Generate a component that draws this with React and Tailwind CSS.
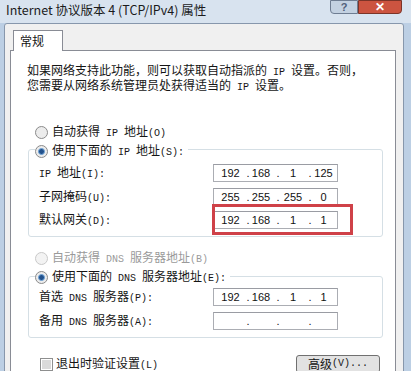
import React from "react";

const cjk = "font-['Noto_Sans_CJK_SC',sans-serif]";

// SimSun-like mix: latin runs in a 6px-per-char mono face
const Mix = ({ s }) =>
  s.split(/([\x20-\x7e]+)/).map((p, i) =>
    i % 2 === 1 ? (
      <span key={i} className="font-['Liberation_Mono',monospace] text-[10px]">
        {p}
      </span>
    ) : (
      p
    )
  );

const Radio = ({ checked, disabled }) => (
  <span
    className={`relative flex h-[13px] w-[13px] shrink-0 items-center justify-center rounded-full border ${
      disabled ? "border-[#c9c9c9] bg-[#f3f3f3]" : "border-[#8b8b8b] bg-[#ececec]"
    }`}
  >
    {checked && <span className="h-[7px] w-[7px] rounded-full border border-[#6fa4d8] bg-[#24528c]" />}
  </span>
);

const RadioRow = ({ text, checked, disabled, className = "" }) => (
  <div className={`flex h-[16px] items-center gap-[4px] leading-[16px] ${className}`}>
    <Radio checked={checked} disabled={disabled} />
    <span className={`whitespace-nowrap ${disabled ? "text-[#9a9a9a]" : ""}`}>
      <Mix s={text} />
    </span>
  </div>
);

const IpBox = ({ parts }) => {
  const cells = ["w-[33px]", "w-[24px]", "w-[20px]", "w-[13px]"];
  const dots = ["w-[2px]", "w-[10px]", "w-[14px]"];
  return (
    <div className="flex h-[18px] w-[125px] items-center border border-[#abadb3] border-t-[#9a9ca3] bg-white font-['Liberation_Sans',sans-serif] text-[11px] text-[#111]">
      {parts.map((p, i) => (
        <React.Fragment key={i}>
          <div className={`flex justify-center whitespace-nowrap ${cells[i]}`}>{p}</div>
          {i < 3 && <div className={`flex justify-center ${dots[i]}`}>.</div>}
        </React.Fragment>
      ))}
    </div>
  );
};

const Row = ({ label, parts, className = "" }) => (
  <div className={`flex h-[18px] items-center pl-[10px] ${className}`}>
    <span className="w-[174px] whitespace-nowrap leading-[16px]">
      <Mix s={label} />
    </span>
    <IpBox parts={parts} />
  </div>
);

export default function App() {
  return (
    <div className={`h-[371px] w-[411px] overflow-hidden bg-[#bccfe4] ${cjk} text-[12px] text-[#151515]`}>
      {/* title bar */}
      <div className="flex h-[23px] items-start bg-[#d8e3ef]">
        <span className="ml-[6px] mt-[2px] whitespace-nowrap text-[12.5px] leading-[16px] text-[#1b1b1b]">
          Internet 协议版本 4 (TCP/IPv4) 属性
        </span>
        <div className="ml-auto mr-[9px] flex h-[14px]">
          <div className="flex h-[14px] w-[28px] items-center justify-center rounded-bl-[4px] border border-[#6e7d92] bg-[#c3d1e1] font-['Liberation_Sans',sans-serif] text-[11px] font-bold leading-none text-[#50607a]">
            ?
          </div>
          <div className="flex h-[14px] w-[44px] items-center justify-center rounded-br-[4px] border border-[#7b3428] bg-[#cc5440] font-['Liberation_Sans',sans-serif] text-[12px] font-bold leading-none text-white">
            ✕
          </div>
        </div>
      </div>

      {/* dialog body */}
      <div className="ml-[4px] h-[360px] w-[400px] rounded-t-[3px] border border-[#8797ac] bg-[#f0f0f0] pl-[5px] pt-[6px]">
        <div className="relative z-10 -mb-px ml-[3px] h-[21px] w-[50px] border border-b-0 border-[#898c95] bg-white pl-[6px] leading-[19px]">
          常规
        </div>
        <div className="h-[330px] w-[386px] border border-[#898c95] bg-white pl-[16px] pt-[13px]">
          <p className="whitespace-nowrap leading-[12px]">
            <Mix s="如果网络支持此功能，则可以获取自动指派的 IP 设置。否则，" />
            <br />
            <Mix s="您需要从网络系统管理员处获得适当的 IP 设置。" />
          </p>

          <RadioRow className="ml-[8px] mt-[30px]" text="自动获得 IP 地址(O)" />

          <div className="ml-[1px] mt-[9px] w-[355px] rounded-[3px] border border-[#d5dfe5] pb-[7px]">
            <RadioRow className="-mt-[7px] ml-[6px] w-fit bg-white pr-[4px]" text="使用下面的 IP 地址(S):" checked />
            <Row className="mt-[5px]" label="IP 地址(I):" parts={["192", "168", "1", "125"]} />
            <Row className="mt-[6px]" label="子网掩码(U):" parts={["255", "255", "255", "0"]} />
            <Row className="mt-[5px]" label="默认网关(D):" parts={["192", "168", "1", "1"]} />
          </div>

          <RadioRow className="ml-[8px] mt-[13px]" text="自动获得 DNS 服务器地址(B)" disabled />

          <div className="ml-[1px] mt-[10px] w-[355px] rounded-[3px] border border-[#d5dfe5] pb-[7px]">
            <RadioRow className="-mt-[8px] ml-[6px] w-fit bg-white pr-[4px]" text="使用下面的 DNS 服务器地址(E):" checked />
            <Row className="mt-[3px]" label="首选 DNS 服务器(P):" parts={["192", "168", "1", "1"]} />
            <Row className="mt-[6px]" label="备用 DNS 服务器(A):" parts={["", "", "", ""]} />
          </div>

          <div className="mt-[17px] flex h-[18px] w-[353px] items-center">
            <div className="ml-[13px] flex h-[13px] w-[13px] items-center justify-center border border-[#8e8f8f] bg-white">
              <div className="h-[9px] w-[9px] bg-[#dadada]" />
            </div>
            <span className="ml-[3px] whitespace-nowrap leading-[16px]">
              <Mix s="退出时验证设置(L)" />
            </span>
            <div className="ml-auto flex h-[18px] w-[84px] items-center justify-center rounded-[3px] border border-[#707070] bg-[#e2e2e2] leading-[16px]">
              <Mix s="高级(V)..." />
            </div>
          </div>
        </div>
      </div>

      {/* annotation highlight */}
      <div className="absolute left-[212px] top-[204px] h-[31px] w-[141px] border-[3px] border-[#cf4148]" />
    </div>
  );
}
